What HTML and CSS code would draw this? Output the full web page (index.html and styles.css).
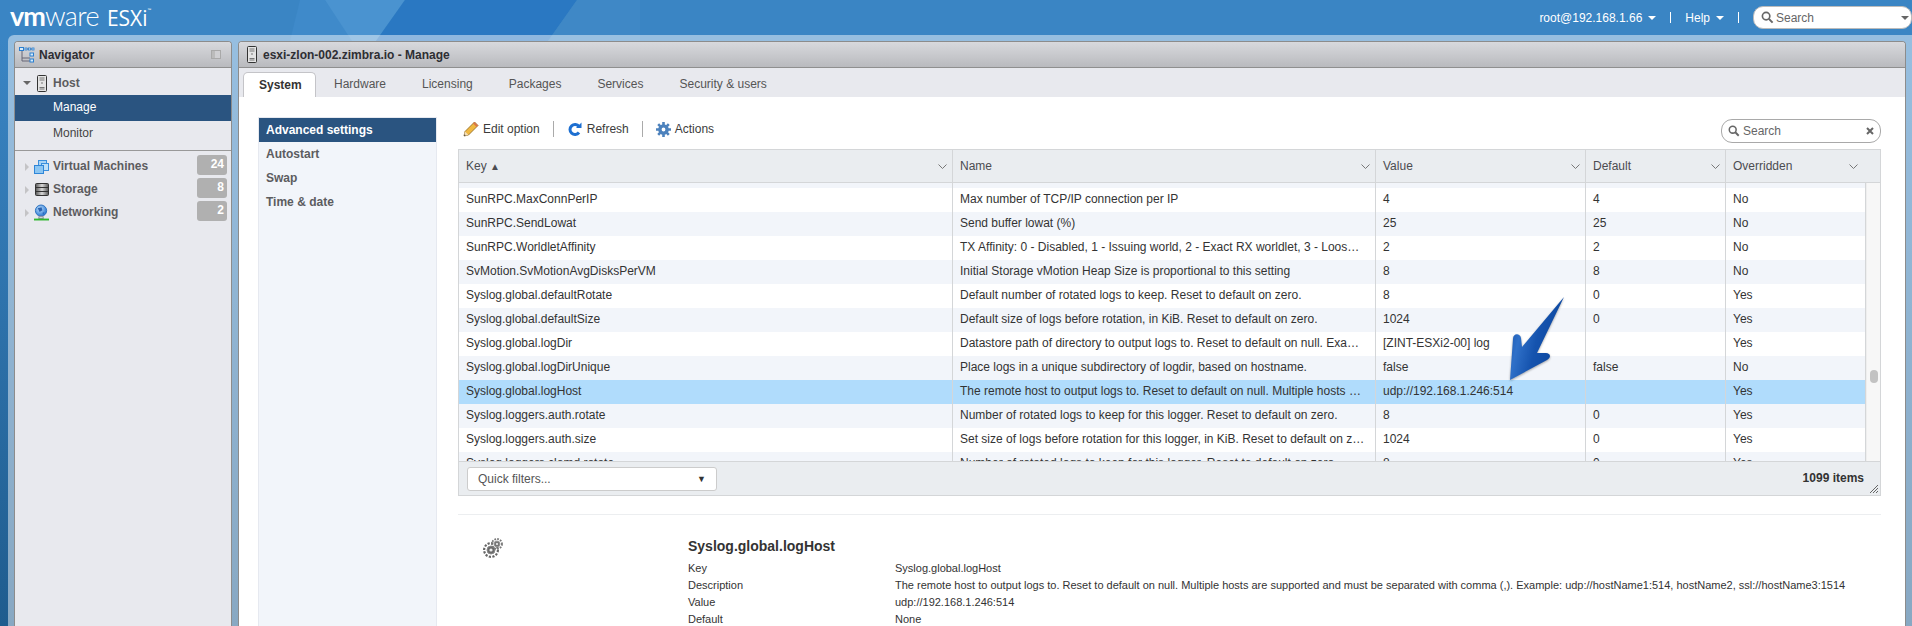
FILE: index.html
```html
<!DOCTYPE html>
<html lang="en">
<head>
  <meta charset="UTF-8" />
  <title>esxi-zlon-002.zimbra.io - VMware ESXi</title>
  <link rel="stylesheet" href="styles.css">
</head>
<body>
  <svg class="facets" width="1912" height="41" viewBox="0 0 1912 41">
    <polygon points="300,0 325,0 354,41 290,41" fill="#3f8aca"/>
    <polygon points="325,0 405,0 376,41 352,41" fill="#4a93d0"/>
    <polygon points="405,0 577,0 548,41 376,41" fill="#2a78c2"/>
    <polygon points="577,0 640,0 640,41 548,41" fill="#3f88c6"/>
  </svg>

  <header class="topbar">
    <div class="logo"><span class="logo-vm">vm</span><span class="logo-ware">ware</span><span class="logo-esxi">ESXi</span><span class="logo-tm">™</span></div>
    <div class="top-links">
      <span>root@192.168.1.66</span><i class="white-caret"></i>
      <b class="top-sep"></b>
      <span>Help</span><i class="white-caret"></i>
      <b class="top-sep"></b>
      <div class="top-search">
        <svg width="13" height="13" viewBox="0 0 14 14"><circle cx="5.5" cy="5.5" r="4" fill="none" stroke="#666" stroke-width="1.8"/><path d="M8.5 8.5L12.5 12.5" stroke="#666" stroke-width="2.2"/></svg>
        <span>Search</span>
        <i class="grey-caret"></i>
      </div>
    </div>
  </header>

  <div class="frame">
    <aside class="panel nav">
      <div class="panel-head">
        <svg class="nav-tree" width="16" height="16" viewBox="0 0 16 16">
          <path d="M3 4V11H11M3 11V14H11M7 2H9M11 2H13" fill="none" stroke="#667" stroke-width="1"/>
          <rect x="0.5" y="0.5" width="4" height="3" fill="#d6ecfb" stroke="#2b7fd0"/>
          <rect x="6" y="1" width="2" height="2" fill="#d6ecfb" stroke="#2b7fd0" stroke-width=".8"/>
          <rect x="9.5" y="1" width="2" height="2" fill="#d6ecfb" stroke="#2b7fd0" stroke-width=".8"/>
          <rect x="13" y="1" width="2" height="2" fill="#d6ecfb" stroke="#2b7fd0" stroke-width=".8"/>
          <rect x="11" y="6" width="3.5" height="3" fill="#d6ecfb" stroke="#2b7fd0"/>
          <rect x="11" y="12" width="3.5" height="3" fill="#d6ecfb" stroke="#2b7fd0"/>
        </svg>
        <span class="panel-title">Navigator</span>
        <span class="pin"><i></i></span>
      </div>
      <div class="host-group">
        <div class="nav-row host-row">
          <span class="slot"><i class="down-caret"></i></span>
          <span class="slot">
            <svg width="10" height="17" viewBox="0 0 10 17"><rect x="0.5" y="0.5" width="9" height="16" rx="1" fill="#e4e4e4" stroke="#333"/><path d="M2.5 3H7.5M2.5 5H7.5M2.5 12.5H7.5M2.5 14H7.5" stroke="#777"/><circle cx="5" cy="8" r=".8" fill="#666"/></svg>
          </span>
          <span class="nav-label">Host</span>
        </div>
        <div class="sub-row sub-active">Manage</div>
        <div class="sub-row">Monitor</div>
      </div>
      <div class="tree">
        <div class="nav-row">
          <span class="slot"><i class="side-caret"></i></span>
          <span class="slot">
            <svg width="15" height="14" viewBox="0 0 15 14"><rect x="4.5" y="0.5" width="8" height="7" fill="#a9d4f5" stroke="#3a8fdc"/><rect x="7.5" y="3.5" width="7" height="7" fill="#bfe0f8" stroke="#3a8fdc"/><rect x="0.5" y="5.5" width="9" height="8" fill="#8cc6f2" stroke="#2f86d8"/></svg>
          </span>
          <span class="nav-label">Virtual Machines</span>
          <span class="count">24</span>
        </div>
        <div class="nav-row">
          <span class="slot"><i class="side-caret"></i></span>
          <span class="slot">
            <svg width="14" height="13" viewBox="0 0 14 13"><defs><linearGradient id="disk" x1="0" x2="1" y1="0" y2="0"><stop offset="0" stop-color="#555"/><stop offset=".5" stop-color="#d8d8d8"/><stop offset="1" stop-color="#555"/></linearGradient></defs><rect x="0.5" y="0.5" width="13" height="12" rx="1" fill="url(#disk)" stroke="#333"/><path d="M0 4.5H14M0 8.5H14" stroke="#333"/></svg>
          </span>
          <span class="nav-label">Storage</span>
          <span class="count">8</span>
        </div>
        <div class="nav-row">
          <span class="slot"><i class="side-caret"></i></span>
          <span class="slot">
            <svg width="16" height="17" viewBox="0 0 16 17"><defs><radialGradient id="globe" cx=".4" cy=".35" r=".7"><stop offset="0" stop-color="#bfe0fb"/><stop offset="1" stop-color="#1c6fd0"/></radialGradient></defs><circle cx="7.5" cy="6.5" r="6" fill="url(#globe)" stroke="#2a6fbe"/><path d="M4 4L8 3L9 6L6 8ZM9 9L11 8L10 11Z" fill="#2a62b0"/><path d="M5.5 12.5H9.5L10 15H5Z" fill="#cfd6dc" stroke="#889"/><rect x="0" y="15" width="16" height="2" fill="#2eb82e"/></svg>
          </span>
          <span class="nav-label">Networking</span>
          <span class="count">2</span>
        </div>
      </div>
    </aside>

    <main class="panel main">
      <div class="panel-head">
        <svg class="head-server" width="10" height="17" viewBox="0 0 10 17"><rect x="0.5" y="0.5" width="9" height="16" rx="1" fill="#e4e4e4" stroke="#333"/><path d="M2.5 3H7.5M2.5 5H7.5M2.5 12.5H7.5M2.5 14H7.5" stroke="#777"/><circle cx="5" cy="8" r=".8" fill="#666"/></svg>
        <span class="panel-title">esxi-zlon-002.zimbra.io - Manage</span>
      </div>
      <nav class="tabs">
        <span class="tab tab-active">System</span>
        <span class="tab">Hardware</span>
        <span class="tab">Licensing</span>
        <span class="tab">Packages</span>
        <span class="tab">Services</span>
        <span class="tab">Security &amp; users</span>
      </nav>

      <div class="content">
        <div class="side-menu">
          <div class="side-item side-active">Advanced settings</div>
          <div class="side-item">Autostart</div>
          <div class="side-item">Swap</div>
          <div class="side-item">Time &amp; date</div>
        </div>

        <section class="settings">
          <div class="toolbar">
            <span class="tool">
              <svg width="16" height="16" viewBox="0 0 16 16"><path d="M1 15L2 10.5L11.5 1L15 4.5L5.5 14Z" fill="#f0b840" stroke="#8a6420" stroke-width=".8"/><path d="M10 2.5L13.5 6L15 4.5L11.5 1Z" fill="#d9774a"/><path d="M1 15L2 10.5L5.5 14Z" fill="#f4dfb8"/><path d="M1 15L1.4 13.2L2.8 14.6Z" fill="#333"/></svg>
              Edit option
            </span>
            <b class="tool-sep"></b>
            <span class="tool">
              <svg width="16" height="15" viewBox="0 0 15 15"><path d="M11.5 4.5A5 5 0 1 0 11.5 10.5" fill="none" stroke="#1d6fd1" stroke-width="3"/><path d="M8.5 6H14V0.5Z" fill="#1d6fd1"/></svg>
              Refresh
            </span>
            <b class="tool-sep"></b>
            <span class="tool">
              <svg width="15" height="15" viewBox="0 0 15 15"><circle cx="7.5" cy="7.5" r="3.6" fill="none" stroke="#4d82bd" stroke-width="3.4"/><path d="M7.5 0V3M7.5 12V15M0 7.5H3M12 7.5H15M2.2 2.2L4.3 4.3M10.7 10.7L12.8 12.8M2.2 12.8L4.3 10.7M10.7 4.3L12.8 2.2" stroke="#4d82bd" stroke-width="2.6"/></svg>
              Actions
            </span>
            <div class="grid-search">
              <svg width="12" height="12" viewBox="0 0 14 14"><circle cx="5.5" cy="5.5" r="4" fill="none" stroke="#666" stroke-width="1.8"/><path d="M8.5 8.5L12.5 12.5" stroke="#666" stroke-width="2.2"/></svg>
              <span>Search</span>
              <svg class="clear" width="8" height="8" viewBox="0 0 8 8"><path d="M1 1L7 7M7 1L1 7" stroke="#666" stroke-width="2"/></svg>
            </div>
          </div>

          <div class="grid">
            <div class="grid-head">
              <div class="col">Key <small>▲</small><svg class="chev" width="9" height="5" viewBox="0 0 9 5"><path d="M.5 .5L4.5 4.5L8.5 .5" fill="none" stroke="#777"/></svg></div>
              <div class="col">Name<svg class="chev" width="9" height="5" viewBox="0 0 9 5"><path d="M.5 .5L4.5 4.5L8.5 .5" fill="none" stroke="#777"/></svg></div>
              <div class="col">Value<svg class="chev" width="9" height="5" viewBox="0 0 9 5"><path d="M.5 .5L4.5 4.5L8.5 .5" fill="none" stroke="#777"/></svg></div>
              <div class="col">Default<svg class="chev" width="9" height="5" viewBox="0 0 9 5"><path d="M.5 .5L4.5 4.5L8.5 .5" fill="none" stroke="#777"/></svg></div>
              <div class="col col-last">Overridden<svg class="chev" width="9" height="5" viewBox="0 0 9 5"><path d="M.5 .5L4.5 4.5L8.5 .5" fill="none" stroke="#777"/></svg></div>
            </div>

            <div class="grid-body">
              <div class="rows">
                <div class="row row-alt"><span></span><span></span><span></span><span></span><span></span></div>
                <div class="row"><span>SunRPC.MaxConnPerIP</span><span>Max number of TCP/IP connection per IP</span><span>4</span><span>4</span><span>No</span></div>
                <div class="row row-alt"><span>SunRPC.SendLowat</span><span>Send buffer lowat (%)</span><span>25</span><span>25</span><span>No</span></div>
                <div class="row"><span>SunRPC.WorldletAffinity</span><span>TX Affinity: 0 - Disabled, 1 - Issuing world, 2 - Exact RX worldlet, 3 - Loos…</span><span>2</span><span>2</span><span>No</span></div>
                <div class="row row-alt"><span>SvMotion.SvMotionAvgDisksPerVM</span><span>Initial Storage vMotion Heap Size is proportional to this setting</span><span>8</span><span>8</span><span>No</span></div>
                <div class="row"><span>Syslog.global.defaultRotate</span><span>Default number of rotated logs to keep. Reset to default on zero.</span><span>8</span><span>0</span><span>Yes</span></div>
                <div class="row row-alt"><span>Syslog.global.defaultSize</span><span>Default size of logs before rotation, in KiB. Reset to default on zero.</span><span>1024</span><span>0</span><span>Yes</span></div>
                <div class="row"><span>Syslog.global.logDir</span><span>Datastore path of directory to output logs to. Reset to default on null. Exa…</span><span>[ZINT-ESXi2-00] log</span><span></span><span>Yes</span></div>
                <div class="row row-alt"><span>Syslog.global.logDirUnique</span><span>Place logs in a unique subdirectory of logdir, based on hostname.</span><span>false</span><span>false</span><span>No</span></div>
                <div class="row row-selected"><span>Syslog.global.logHost</span><span>The remote host to output logs to. Reset to default on null. Multiple hosts …</span><span>udp://192.168.1.246:514</span><span></span><span>Yes</span></div>
                <div class="row row-alt"><span>Syslog.loggers.auth.rotate</span><span>Number of rotated logs to keep for this logger. Reset to default on zero.</span><span>8</span><span>0</span><span>Yes</span></div>
                <div class="row"><span>Syslog.loggers.auth.size</span><span>Set size of logs before rotation for this logger, in KiB. Reset to default on z…</span><span>1024</span><span>0</span><span>Yes</span></div>
                <div class="row row-alt"><span>Syslog.loggers.clomd.rotate</span><span>Number of rotated logs to keep for this logger. Reset to default on zero.</span><span>8</span><span>0</span><span>Yes</span></div>
              </div>
              <div class="scrollbar"><i class="thumb"></i></div>
            </div>

            <div class="grid-foot">
              <div class="quick-filter"><span>Quick filters...</span><small>▼</small></div>
              <strong class="item-count">1099 items</strong>
              <svg class="grip" width="8" height="8" viewBox="0 0 8 8"><path d="M0 8L8 0M3 8L8 3M6 8L8 6" stroke="#666"/></svg>
            </div>

            <svg class="callout" width="90" height="100" viewBox="0 0 90 100">
              <defs>
                <linearGradient id="arrow" x1="0" y1="0" x2="1" y2=".35">
                  <stop offset="0" stop-color="#0f4ca6"/>
                  <stop offset=".3" stop-color="#2f70c8"/>
                  <stop offset=".6" stop-color="#1553ae"/>
                  <stop offset="1" stop-color="#0c479f"/>
                </linearGradient>
              </defs>
              <path d="M84 8L42 58L41 49C40 44 33 44 33 50L30 91L67 71C72 68 70 64 66 64L57 64Z" fill="url(#arrow)"/>
            </svg>
          </div>

          <div class="detail">
            <svg class="detail-gear" width="20" height="20" viewBox="0 0 20 20">
              <circle cx="8" cy="12" r="6.9" fill="none" stroke="#666" stroke-width="2.2" stroke-dasharray="2.2 1.4"/>
              <circle cx="8" cy="12" r="4" fill="#6a6a6a" stroke="#8a8a8a"/>
              <circle cx="8" cy="12" r="1.6" fill="#eee"/>
              <circle cx="14" cy="6" r="5" fill="none" stroke="#777" stroke-width="1.8" stroke-dasharray="1.7 1.2"/>
              <circle cx="14" cy="6" r="3" fill="#777" stroke="#999"/>
              <circle cx="14" cy="6" r="1.1" fill="#eee"/>
            </svg>
            <div class="detail-info">
              <h3>Syslog.global.logHost</h3>
              <div class="detail-row"><span>Key</span><span>Syslog.global.logHost</span></div>
              <div class="detail-row"><span>Description</span><span>The remote host to output logs to. Reset to default on null. Multiple hosts are supported and must be separated with comma (,). Example: udp://hostName1:514, hostName2, ssl://hostName3:1514</span></div>
              <div class="detail-row"><span>Value</span><span>udp://192.168.1.246:514</span></div>
              <div class="detail-row"><span>Default</span><span>None</span></div>
            </div>
          </div>
        </section>
      </div>
    </main>
  </div>
</body>
</html>
```

FILE: styles.css
```css
* {
  box-sizing: border-box;
}

html, body {
  height: 100%;
}

body {
  margin: 0;
  overflow: hidden;
  font-family: "Liberation Sans", Arial, sans-serif;
  font-size: 12px;
  color: #333;
  background: linear-gradient(#3a85c4 0, #3a85c4 40px, #1f5c8e 100%);
}

.facets {
  position: absolute;
  top: 0;
  left: 0;
}

/* top bar */
.topbar {
  position: relative;
  height: 35px;
  display: flex;
  align-items: center;
  justify-content: space-between;
  padding-left: 10px;
  color: #fff;
}

.logo {
  display: flex;
  align-items: baseline;
  font-family: Lato, sans-serif;
  margin-top: -4px;
}

.logo-vm {
  font-size: 27px;
  font-weight: 700;
  letter-spacing: -1px;
}

.logo-ware {
  font-size: 27px;
  font-weight: 300;
  letter-spacing: -.6px;
}

.logo-esxi {
  font-family: "Open Sans", sans-serif;
  font-size: 21px;
  margin-left: 8px;
}

.logo-tm {
  font-size: 5px;
  align-self: flex-start;
  margin-top: 8px;
}

.top-links {
  display: flex;
  align-items: center;
}

.white-caret {
  width: 0;
  height: 0;
  margin-left: 6px;
  border-left: 4px solid transparent;
  border-right: 4px solid transparent;
  border-top: 4px solid #fff;
}

.top-sep {
  width: 1px;
  height: 11px;
  margin: 0 14px;
  background: #fff;
}

.top-search {
  width: 159px;
  height: 23px;
  padding: 0 2px 0 7px;
  display: flex;
  align-items: center;
  gap: 2px;
  color: #666;
  background: #fff;
  border: 1px solid #bbb;
  border-radius: 10px;
}

.grey-caret {
  width: 0;
  height: 0;
  margin-left: auto;
  border-left: 4px solid transparent;
  border-right: 4px solid transparent;
  border-top: 4px solid #666;
}

/* panels */
.frame {
  position: relative;
  height: 591px;
  margin-left: 8px;
  padding: 6px 6px 0;
  display: flex;
  gap: 6px;
  background: rgba(255, 255, 255, .47);
  border-radius: 6px 0 0 0;
}

.panel {
  display: flex;
  flex-direction: column;
  border: 1px solid #8c8c8c;
  border-bottom: none;
  border-radius: 4px 4px 0 0;
  background: #e8e9ee;
}

.nav {
  width: 218px;
  flex: none;
}

.main {
  flex: 1;
  min-width: 0;
}

.panel-head {
  height: 26px;
  flex: none;
  display: flex;
  align-items: center;
  background: linear-gradient(#d8d9dd, #b9babe);
  border-bottom: 1px solid #8f8f8f;
  border-radius: 3px 3px 0 0;
}

.panel-title {
  font-weight: bold;
  color: #2e2e33;
}

.nav-tree {
  margin: 0 4px 0 4px;
}

.head-server {
  margin: 0 6px 0 8px;
}

.pin {
  width: 10px;
  height: 9px;
  margin-left: auto;
  margin-right: 10px;
  border: 1px solid #a9a9a9;
  background: #cfcfd2;
}

.pin i {
  display: block;
  width: 3px;
  height: 7px;
  background: #bbb;
}

/* navigator */
.host-group {
  padding: 3px 0;
  border-bottom: 1px solid #999;
}

.nav-row {
  height: 23px;
  padding-left: 4px;
  display: flex;
  align-items: center;
}

.host-row {
  height: 24px;
}

.slot {
  width: 15px;
  flex: none;
  display: flex;
  align-items: center;
  justify-content: center;
}

.nav-label {
  margin: -2px 0 0 4px;
  font-weight: bold;
  color: #5c5c5f;
}

.host-row .nav-label {
  margin-top: 0;
}

.down-caret {
  width: 0;
  height: 0;
  border-left: 4px solid transparent;
  border-right: 4px solid transparent;
  border-top: 4px solid #666;
}

.side-caret {
  width: 0;
  height: 0;
  border-top: 4px solid transparent;
  border-bottom: 4px solid transparent;
  border-left: 4px solid #c4c4c6;
}

.sub-row {
  height: 26px;
  padding-left: 38px;
  line-height: 24px;
  color: #444;
}

.sub-active {
  color: #fff;
  background: #2a5480;
}

.tree {
  padding-top: 4px;
}

.count {
  width: 30px;
  height: 20px;
  margin: -3px 4px 0 auto;
  padding-right: 3px;
  line-height: 19px;
  text-align: right;
  font-weight: bold;
  color: #fff;
  background: #b0b0b0;
  border-radius: 3px;
}

/* main panel */
.tabs {
  height: 29px;
  flex: none;
  padding: 4px 0 0 4px;
  display: flex;
}

.tab {
  padding: 0 18px;
  line-height: 25px;
  color: #555;
}

.tab-active {
  width: 73px;
  padding: 0 15px;
  font-weight: bold;
  color: #333;
  background: #fff;
  border: 1px solid #c4c4c8;
  border-bottom: none;
  border-radius: 5px 5px 0 0;
}

.content {
  flex: 1;
  min-height: 0;
  padding: 20px 24px 0 19px;
  display: flex;
  gap: 21px;
  background: #fff;
}

.side-menu {
  width: 179px;
  flex: none;
  background: #f2f5fa;
  border: 1px solid #e6e9f0;
  border-bottom: none;
}

.side-item {
  height: 24px;
  padding-left: 7px;
  line-height: 24px;
  font-weight: bold;
  color: #5c5c5f;
}

.side-active {
  color: #fff;
  background: #2a5480;
}

.settings {
  flex: 1;
  min-width: 0;
}

.toolbar {
  height: 24px;
  margin-bottom: 8px;
  padding-left: 5px;
  display: flex;
  align-items: center;
  color: #3c3c3c;
}

.tool {
  display: flex;
  align-items: center;
  gap: 4px;
}

.tool-sep {
  width: 1px;
  height: 16px;
  margin: 0 13px;
  background: #aaa;
}

.grid-search {
  width: 160px;
  height: 24px;
  margin-left: auto;
  margin-top: 3px;
  padding: 0 6px;
  display: flex;
  align-items: center;
  gap: 3px;
  color: #666;
  background: #fff;
  border: 1px solid #a9a9a9;
  border-radius: 11px;
}

.clear {
  margin-left: auto;
}

/* settings grid */
.grid {
  position: relative;
  border: 1px solid #d4d6d8;
}

.grid-head,
.row {
  display: grid;
  grid-template-columns: 494px 423px 210px 140px 140px;
}

.grid-head {
  height: 33px;
  grid-template-columns: 494px 423px 210px 140px 154px;
  background: #eaedf0;
  border-bottom: 1px solid #d4d6d8;
  color: #4c4c50;
}

.col {
  position: relative;
  padding-left: 7px;
  line-height: 32px;
  border-right: 1px solid #d4d6d8;
}

.col small {
  font-size: 10px;
}

.col-last {
  border-right: none;
}

.chev {
  position: absolute;
  top: 14px;
  right: 5px;
}

.col-last .chev {
  right: 22px;
}

.grid-body {
  height: 278px;
  display: flex;
  overflow: hidden;
}

.rows {
  width: 1407px;
  margin-top: -19px;
}

.row {
  height: 24px;
  line-height: 22px;
  background: #fff;
}

.row span {
  padding: 0 7px;
  white-space: nowrap;
  overflow: hidden;
  border-right: 1px solid #d4d6d8;
}

.row-alt {
  background: #f2f5fa;
}

.row-selected {
  background: #b0dcfc;
}

.scrollbar {
  flex: 1;
  position: relative;
  background: #f7f7f7;
  border-left: 1px solid #eee;
}

.thumb {
  position: absolute;
  top: 187px;
  left: 3px;
  width: 8px;
  height: 13px;
  background: #c2c2c2;
  border-radius: 4px;
}

.grid-foot {
  position: relative;
  height: 34px;
  padding: 5px 16px 0 8px;
  display: flex;
  justify-content: space-between;
  background: #eaedf0;
  border-top: 1px solid #d4d6d8;
}

.quick-filter {
  width: 250px;
  height: 24px;
  padding: 0 10px;
  display: flex;
  align-items: center;
  justify-content: space-between;
  color: #555;
  background: #fff;
  border: 1px solid #ccc;
  border-radius: 3px;
}

.quick-filter small {
  font-size: 9px;
  color: #333;
}

.item-count {
  line-height: 23px;
  color: #333;
}

.grip {
  position: absolute;
  right: 2px;
  bottom: 2px;
}

.callout {
  position: absolute;
  top: 139px;
  left: 1021px;
  filter: drop-shadow(0 1px 1px rgba(0, 0, 0, .35));
}

/* detail of the selected row */
.detail {
  margin-top: 18px;
  padding: 25px 0 0 25px;
  display: flex;
  border-top: 1px solid #eceef0;
}

.detail-gear {
  flex: none;
  margin: -2px 185px 0 0;
}

.detail-info {
  flex: 1;
  min-width: 0;
  font-size: 11px;
}

.detail-info h3 {
  margin: -1px 0 7px;
  font-size: 14px;
  line-height: 14px;
}

.detail-row {
  height: 17px;
  line-height: 17px;
  display: flex;
  white-space: nowrap;
}

.detail-row span:first-child {
  width: 207px;
  flex: none;
}
```
